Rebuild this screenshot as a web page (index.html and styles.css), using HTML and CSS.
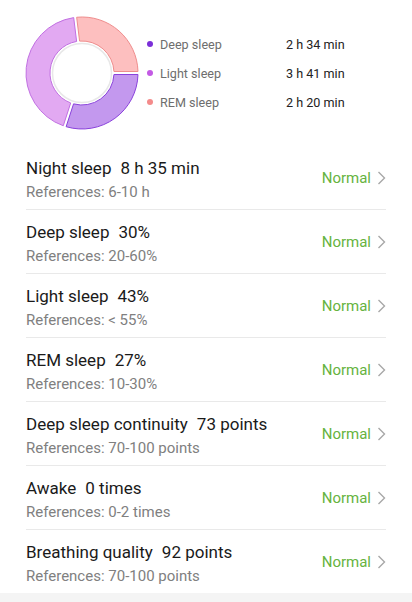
FILE: index.html
```html
<html>
<head>
  <title>Sleep details</title>
  <link rel="stylesheet" href="styles.css">
</head>
<body>
  <div class="summary">
    <svg class="donut" width="120" height="120" viewBox="-60 -60 120 120">
      <path class="seg-deep" d="M 55.98 1.50 A 56 56 0 0 1 -15.87 53.70 L -8.45 30.86 A 32 32 0 0 0 31.96 1.50 Z" />
      <path class="seg-light" d="M -18.72 52.78 A 56 56 0 0 1 -8.31 -55.38 L -5.38 -31.54 A 32 32 0 0 0 -11.30 29.94 Z" />
      <path class="seg-rem" d="M -5.33 -55.75 A 56 56 0 0 1 55.98 -1.50 L 31.96 -1.50 A 32 32 0 0 0 -2.41 -31.91 Z" />
      <circle class="hole" cx="0" cy="0" r="29.5" />
    </svg>

    <div class="legend">
      <div class="legend-row">
        <span class="dot dot-deep"></span>
        <span class="legend-name">Deep sleep</span>
        <span class="legend-value">2 h 34 min</span>
      </div>
      <div class="legend-row">
        <span class="dot dot-light"></span>
        <span class="legend-name">Light sleep</span>
        <span class="legend-value">3 h 41 min</span>
      </div>
      <div class="legend-row">
        <span class="dot dot-rem"></span>
        <span class="legend-name">REM sleep</span>
        <span class="legend-value">2 h 20 min</span>
      </div>
    </div>
  </div>

  <div class="list">
    <div class="item">
      <div class="info">
        <div class="title">Night sleep<span class="val">8 h 35 min</span></div>
        <div class="ref">References: 6-10 h</div>
      </div>
      <span class="status">Normal</span>
      <svg class="chev" width="9" height="14" viewBox="0 0 9 14"><path d="M1.5 1 L7.5 7 L1.5 13" /></svg>
    </div>
    <div class="item">
      <div class="info">
        <div class="title">Deep sleep<span class="val">30%</span></div>
        <div class="ref">References: 20-60%</div>
      </div>
      <span class="status">Normal</span>
      <svg class="chev" width="9" height="14" viewBox="0 0 9 14"><path d="M1.5 1 L7.5 7 L1.5 13" /></svg>
    </div>
    <div class="item">
      <div class="info">
        <div class="title">Light sleep<span class="val">43%</span></div>
        <div class="ref">References: &lt; 55%</div>
      </div>
      <span class="status">Normal</span>
      <svg class="chev" width="9" height="14" viewBox="0 0 9 14"><path d="M1.5 1 L7.5 7 L1.5 13" /></svg>
    </div>
    <div class="item">
      <div class="info">
        <div class="title">REM sleep<span class="val">27%</span></div>
        <div class="ref">References: 10-30%</div>
      </div>
      <span class="status">Normal</span>
      <svg class="chev" width="9" height="14" viewBox="0 0 9 14"><path d="M1.5 1 L7.5 7 L1.5 13" /></svg>
    </div>
    <div class="item">
      <div class="info">
        <div class="title">Deep sleep continuity<span class="val">73 points</span></div>
        <div class="ref">References: 70-100 points</div>
      </div>
      <span class="status">Normal</span>
      <svg class="chev" width="9" height="14" viewBox="0 0 9 14"><path d="M1.5 1 L7.5 7 L1.5 13" /></svg>
    </div>
    <div class="item">
      <div class="info">
        <div class="title">Awake<span class="val">0 times</span></div>
        <div class="ref">References: 0-2 times</div>
      </div>
      <span class="status">Normal</span>
      <svg class="chev" width="9" height="14" viewBox="0 0 9 14"><path d="M1.5 1 L7.5 7 L1.5 13" /></svg>
    </div>
    <div class="item">
      <div class="info">
        <div class="title">Breathing quality<span class="val">92 points</span></div>
        <div class="ref">References: 70-100 points</div>
      </div>
      <span class="status">Normal</span>
      <svg class="chev" width="9" height="14" viewBox="0 0 9 14"><path d="M1.5 1 L7.5 7 L1.5 13" /></svg>
    </div>
  </div>

  <div class="footer-band"></div>
</body>
</html>
```

FILE: styles.css
```css
body {
  margin: 0;
  padding: 0;
  background-color: white;
  font-family: Roboto, "Noto Sans", sans-serif;
  color: #1a1a1a;
}

.summary {
  height: 146px;
  display: flex;
  align-items: center;
}

.donut {
  margin-left: 22px;
}

.seg-deep {
  fill: #c398ee;
  stroke: #8a42dc;
  stroke-width: 1;
}

.seg-light {
  fill: #e2a9f2;
  stroke: #c170e2;
  stroke-width: 1;
}

.seg-rem {
  fill: #fdbfbf;
  stroke: #ef8d8d;
  stroke-width: 1;
}

.hole {
  fill: white;
  stroke: #e8e8e8;
  stroke-width: 1.5;
}

.legend {
  margin-left: 4px;
  display: flex;
  flex-direction: column;
}

.legend-row {
  height: 29px;
  display: flex;
  align-items: center;
  font-size: 12.6px;
}

.dot {
  width: 6px;
  height: 6px;
  border-radius: 50%;
  margin-left: 1px;
  margin-right: 7px;
}

.dot-deep {
  background-color: #7b2fd8;
}

.dot-light {
  background-color: #c35ae4;
}

.dot-rem {
  background-color: #f48b8b;
}

.legend-name {
  width: 126px;
  color: #6e6e6e;
}

.legend-value {
  color: #222;
}

.list {
  padding: 0 26px;
}

.item {
  height: 63px;
  display: flex;
  align-items: center;
  border-bottom: 1px solid #e9e9e9;
}

.item:last-child {
  border-bottom: none;
}

.info {
  flex: 1;
  padding-top: 4px;
}

.title {
  font-size: 17px;
  line-height: 22px;
}

.val {
  margin-left: 9px;
}

.ref {
  margin-top: 3px;
  font-size: 15px;
  line-height: 20px;
  color: #808080;
}

.status {
  font-size: 15px;
  color: #66b340;
  margin-right: 6px;
}

.chev path {
  fill: none;
  stroke: #a8a8a8;
  stroke-width: 1.4;
}

.footer-band {
  height: 20px;
  background-color: #f4f4f4;
}
```
